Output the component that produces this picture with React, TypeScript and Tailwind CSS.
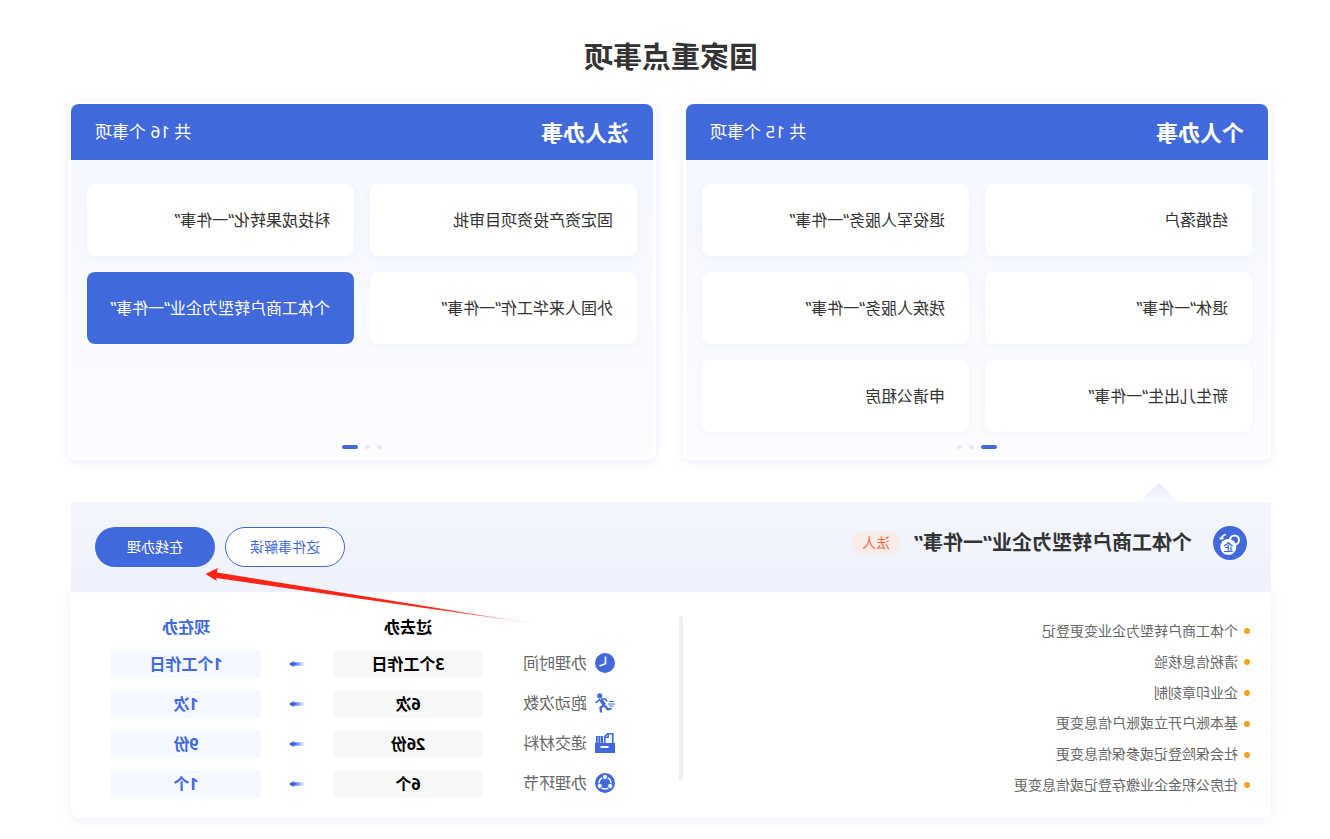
import React from "react";

const personal = [
  "结婚落户",
  "退役军人服务“一件事”",
  "退休“一件事”",
  "残疾人服务“一件事”",
  "新生儿出生“一件事”",
  "申请公租房",
];
const corporate = [
  "固定资产投资项目审批",
  "科技成果转化“一件事”",
  "外国人来华工作“一件事”",
  "个体工商户转型为企业“一件事”",
];
const steps = [
  "个体工商户转型为企业变更登记",
  "清税信息核验",
  "企业印章刻制",
  "基本账户开立或账户信息变更",
  "社会保险登记或参保信息变更",
  "住房公积金企业缴存登记或信息变更",
];

function ClockIcon() {
  return (
    <svg width="20" height="20" viewBox="0 0 20 20">
      <circle cx="10" cy="10" r="10" fill="#4169dc" />
      <path d="M9.5 3.5V10.7L15.5 13" fill="none" stroke="#fff" strokeWidth="1.7" />
    </svg>
  );
}

function RunnerIcon() {
  return (
    <svg width="20" height="20" viewBox="0 0 20 20" fill="none" stroke="#4169dc">
      <circle cx="15.3" cy="2.8" r="2.6" fill="#4169dc" stroke="none" />
      <path d="M14.5 6.5L10.5 12" strokeWidth="3.6" />
      <path d="M10.5 12L14.5 14.5L14 19.5" strokeWidth="2.3" />
      <path d="M10.5 12.5L7 16.5L3.5 15.5" strokeWidth="2.3" />
      <path d="M15 6L18 9L19.8 9.5" strokeWidth="1.6" />
      <path d="M14 6H9.5L8 8.5" strokeWidth="1.6" />
      <path d="M1 8.5H6M0 11H7M1.5 13H6" strokeWidth="1" />
    </svg>
  );
}

function BoxIcon() {
  return (
    <svg width="20" height="20" viewBox="0 0 20 20">
      <path d="M0 10H20V20H0Z" fill="#4169dc" />
      <path d="M6.5 13H14.5V15H6.5Z" fill="#fff" />
      <path
        d="M2.2 10V0.8H7.5L10.3 3.6V10"
        fill="#eef2fd"
        stroke="#4169dc"
        strokeWidth="1.6"
      />
      <path d="M6.8 1V4.3H10" fill="none" stroke="#4169dc" strokeWidth="1.4" />
      <path d="M12 3H19V10H12Z" fill="#4169dc" />
      <path d="M14 3.5H14.8V10H14ZM16.5 3.5H17.3V10H16.5Z" fill="#c6d3f6" />
    </svg>
  );
}

function NodesIcon() {
  return (
    <svg width="20" height="20" viewBox="0 0 20 20">
      <circle cx="10" cy="10" r="10" fill="#4169dc" />
      <circle cx="10" cy="10" r="6" fill="none" stroke="#fff" strokeWidth="1.6" />
      <circle cx="10" cy="4" r="2.6" fill="#fff" stroke="#4169dc" />
      <circle cx="4.8" cy="13" r="2.6" fill="#fff" stroke="#4169dc" />
      <circle cx="15.2" cy="13" r="2.6" fill="#fff" stroke="#4169dc" />
    </svg>
  );
}

function SmallArrow({ id }: { id: string }) {
  return (
    <svg width="15" height="6" viewBox="0 0 15 6">
      <defs>
        <linearGradient id={id} x1="0" x2="1" y1="0" y2="0">
          <stop offset="0" stopColor="#7fa0f0" stopOpacity="0.2" />
          <stop offset="0.6" stopColor="#3d6ce6" />
          <stop offset="1" stopColor="#2a5ce0" />
        </linearGradient>
      </defs>
      <path d="M0 1.2H10.5V0L15 3L10.5 6V4.8H0Z" fill={`url(#${id})`} />
    </svg>
  );
}

const rows = [
  { icon: <ClockIcon />, label: "办理时间", past: "3个工作日", now: "1个工作日" },
  { icon: <RunnerIcon />, label: "跑动次数", past: "6次", now: "1次" },
  { icon: <BoxIcon />, label: "递交材料", past: "26份", now: "9份" },
  { icon: <NodesIcon />, label: "办理环节", past: "6个", now: "1个" },
];

function Card({
  title,
  count,
  items,
  activeDot,
  activeItem,
}: {
  title: string;
  count: string;
  items: string[];
  activeDot: number;
  activeItem?: string;
}) {
  return (
    <div className="flex h-[359px] w-[588px] shrink-0 flex-col rounded-lg border-[3px] border-white bg-gradient-to-b from-[#f4f7ff] to-[#fcfcff] shadow-[0_2px_10px_rgba(65,105,220,0.12)]">
      <div className="flex h-14 items-center justify-between rounded-t-lg bg-[#4169dc] px-6 text-white">
        <span className="text-[22px] font-bold">{title}</span>
        <span className="text-[17px]">{count}</span>
      </div>
      <div className="grid flex-1 grid-cols-2 content-start gap-4 px-4 pt-6">
        {items.map((item) => (
          <div
            key={item}
            className={
              item === activeItem
                ? "flex h-[72px] items-center rounded-lg bg-[#4169dc] pl-6 text-base text-white"
                : "flex h-[72px] items-center rounded-lg bg-white pl-6 text-base text-[#333] shadow-[0_2px_8px_rgba(65,105,220,0.05)]"
            }
          >
            {item}
          </div>
        ))}
      </div>
      <div className="flex items-center justify-center gap-[7px] pb-[8px]">
        {[0, 1, 2].map((i) =>
          i === activeDot ? (
            <span key={i} className="h-1 w-4 rounded-full bg-[#4169dc]" />
          ) : (
            <span key={i} className="h-1 w-[5px] rounded-full bg-[#e2e8fa]" />
          )
        )}
      </div>
    </div>
  );
}

export default function App() {
  return (
    <div className="relative h-[839px] w-[1330px] -scale-x-100 overflow-hidden bg-white font-['Noto_Sans','Noto_Sans_CJK_SC',sans-serif] text-[#333]">
      <div className="ml-[59px] w-[1200px] pt-9">
        <h1 className="mb-[23px] text-center text-[29px] leading-[42px] font-bold text-[#333]">
          国家重点事项
        </h1>

        <div className="flex gap-[27px]">
          <Card title="个人办事" count="共 15 个事项" items={personal} activeDot={0} />
          <Card
            title="法人办事"
            count="共 16 个事项"
            items={corporate}
            activeDot={2}
            activeItem="个体工商户转型为企业“一件事”"
          />
        </div>

        <div className="relative mt-[42px] flex h-[90px] items-center bg-gradient-to-b from-[#f3f6fe] to-[#eff2fc] pr-6 pl-6">
          <div className="absolute -top-[19px] left-[92px] h-[19px] w-[40px] bg-gradient-to-b from-[#e6ebfb] to-[#f8faff] [clip-path:polygon(50%_0,100%_100%,0_100%)]" />
          <div className="mb-2 flex items-center">
            <svg width="34" height="34" viewBox="0 0 34 34">
              <circle cx="17" cy="17" r="17" fill="#4169dc" />
              <circle cx="12.5" cy="14" r="4.5" fill="none" stroke="#fff" strokeWidth="2" />
              <circle cx="18.7" cy="21" r="8" fill="#fff" />
              <path d="M21 8.5C24 9 25.5 11 25.5 13.5M25.5 13.5L23.5 11.8M25.5 13.5L27.3 11.5" fill="none" stroke="#fff" strokeWidth="1.5" />
              <text x="18.7" y="25" fontSize="10" fontWeight="700" textAnchor="middle" fill="#4169dc">
                企
              </text>
            </svg>
            <span className="ml-[21px] text-[20px] font-bold text-[#333]">
              个体工商户转型为企业“一件事”
            </span>
            <span className="ml-[14px] flex h-6 w-12 items-center justify-center rounded-full bg-[#f8ece9] text-sm text-[#ff6a3c]">
              法人
            </span>
          </div>
          <div className="ml-auto flex gap-[10px]">
            <button className="h-10 w-[120px] rounded-full border border-[#4169dc] bg-white text-sm text-[#4169dc]">
              这件事解读
            </button>
            <button className="h-10 w-[120px] rounded-full bg-[#4169dc] text-sm text-white">
              在线办理
            </button>
          </div>
        </div>

        <div className="flex h-[226px] rounded-b-lg bg-white shadow-[0_2px_12px_rgba(65,105,220,0.1)]">
          <ul className="w-[588px] pt-6 pl-[21px]">
            {steps.map((step) => (
              <li key={step} className="flex items-center text-sm leading-[30.8px] text-[#666]">
                <span className="mr-[6px] h-[6px] w-[6px] rounded-full bg-[#f7a21b]" />
                {step}
              </li>
            ))}
          </ul>
          <div className="mt-6 h-[164px] w-1 rounded-full bg-[#eeeeee]" />
          <div className="pt-[21px] pl-16">
            <div className="mb-[9px] grid h-7 grid-cols-[132px_150px_72px_150px] items-center text-center text-base font-bold">
              <span />
              <span className="text-black">过去办</span>
              <span />
              <span className="text-[#4169dc]">现在办</span>
            </div>
            <div className="flex flex-col gap-3">
              {rows.map((row, index) => (
                <div key={row.label} className="grid h-7 grid-cols-[132px_150px_72px_150px] items-center text-center text-base">
                  <span className="mb-[3px] flex items-center gap-2 text-[#666]">
                    {row.icon}
                    {row.label}
                  </span>
                  <span className="bg-[#f8f8f8] font-bold leading-7 text-black">{row.past}</span>
                  <span className="flex justify-center">
                    <SmallArrow id={`small-arrow-${index}`} />
                  </span>
                  <span className="bg-[#f4f7fe] font-bold leading-7 text-[#4169dc]">{row.now}</span>
                </div>
              ))}
            </div>
          </div>
        </div>
      </div>

      {/* annotation over the page */}
      <svg className="pointer-events-none absolute inset-0" width="1330" height="839" viewBox="0 0 1330 839">
        <defs>
          <linearGradient id="red-arrow" gradientUnits="userSpaceOnUse" x1="790" y1="624" x2="900" y2="607">
            <stop offset="0" stopColor="#ff2a1f" stopOpacity="0" />
            <stop offset="1" stopColor="#ff2415" />
          </linearGradient>
        </defs>
        <path d="M790 624.5L1113 572.5L1112.3 568L1124.5 574L1113.3 581L1113.8 578Z" fill="url(#red-arrow)" />
      </svg>
    </div>
  );
}
